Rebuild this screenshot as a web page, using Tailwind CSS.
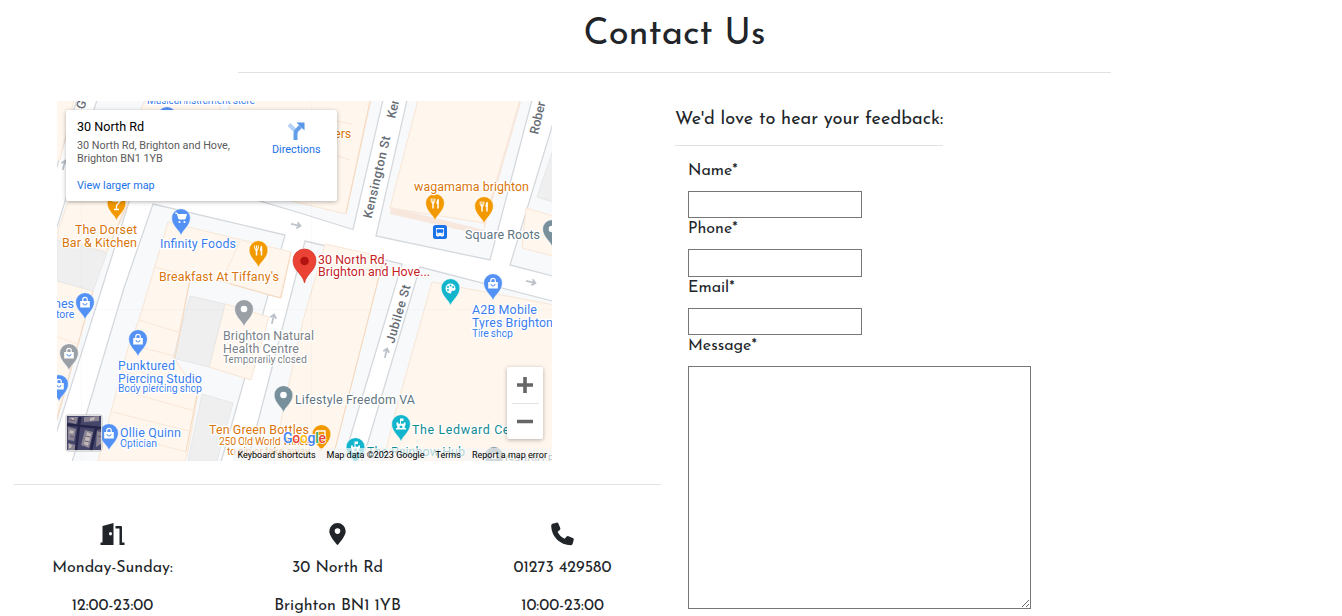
<!DOCTYPE html>
<html lang="en">
<head>
<meta charset="utf-8">
<title>Contact Us</title>
<script src="https://cdn.jsdelivr.net/npm/@tailwindcss/browser@4"></script>
</head>
<body class="bg-white text-[#212529] font-['Josefin_Sans','Lato',sans-serif] text-[16px] leading-6 h-[616px] overflow-hidden">
<header class="mx-auto w-[873px] translate-x-[3px] h-[73px] border-b border-[#e1e2e3] text-center pt-[11px]">
  <h1 class="pl-px text-[36.400px] leading-[48px]">Contact Us</h1>
</header>
<main class="flex">
<section class="w-[675px] shrink-0 pt-7">
  <div class="relative ml-[57px] w-[495px] h-[360px] overflow-hidden font-['Roboto',sans-serif]">
    <svg width="495" height="360" viewBox="57 101 495 360" class="block">
      <defs>
        <g id="pin"><path d="M0 13.500C-1.500 8-9.300 4-9.300-4A9.300 9.300 0 0 1 9.300-4C9.300 4 1.500 8 0 13.500Z" stroke="#fff" stroke-opacity=".6" stroke-width=".8"/></g>
        <g id="bag" fill="#fff"><path d="M-4.800-5h9.600v6.500h-9.600z"/><path d="M-2.200-5v-1.500a2.200 2.200 0 0 1 4.400 0V-5" fill="none" stroke="#fff" stroke-width="1.200"/><path d="M-2-3a2 2 0 0 0 4 0" fill="none" stroke="#5491f5"/></g>
        <g id="fork" fill="none" stroke="#fff"><path d="M-3.800-8.500v3M-2-8.500v3M-.2-8.500v3" stroke-width="1"/><path d="M-4.300-5.500h4.600l-1.300 2h-2z" fill="#fff" stroke="none"/><path d="M-2-4v5.500M3 1.500v-9" stroke-width="1.500"/><path d="M3.500-8.500v5.500H1.500q-.3-4 2-5.500z" fill="#fff" stroke="none"/></g>
        <g id="fort" fill="#fff"><path fill-rule="evenodd" d="M-4.500-5.500h1.800v1.200h1.700V-9.500h3.500v2.500H0v2.700h2.700v-1.200h1.800v3h-.8V0h1.300v1.500h-10V0h1.300v-2.500h-.8zM-1.300 0h2.600v-2.300h-2.600z"/></g>
        <g id="arrow" fill="none" stroke="#bcc2ca" stroke-width="1.800"><path d="M0 5v-9M-3-1l3-3.500L3-1"/></g>
      </defs>
      <path fill="#fff" d="M57 101h495v360H57z"/>
      <g fill="#f7f9fb" stroke="#d5d8dc" stroke-width="1.300">
        <path d="M56 100H77L56 170Z"/>
        <path d="M97 100H383L353 229.500L300 213L150 168L129 202L56 434V230Z"/>
        <path d="M407 100H532L490 260L376 236Z"/>
        <path d="M560 100L510 265L560 278Z"/>
        <path d="M153 204L285 235L233 420L221 462H72L124 288Z"/>
        <path d="M305 241L402 264L350 438L343 462H247L255 433Z"/>
        <path d="M420 267L560 303V462H361L368 442Z"/>
      </g>
      <g fill="#fff6ee" stroke="#f8e6d4" stroke-width="1">
        <path d="M56 100H74L60 160H56Z"/>
        <path d="M145 100H222L219 112H140Z"/>
        <path d="M230 100H371L346 214L300 203L220 180Z"/>
        <path d="M418 100H520L484 223L390 208Z"/>
        <path d="M68 202H127L107 252L58 238V230Z"/>
        <path d="M56 280L93 291L56 420Z"/>
        <path d="M168 222L291 252L280 298L232 284L191 274L174 358L198 394L188 451L185 461H98L129 344L139 320Z"/>
        <path d="M225 304L269 317L251 380L209 367Z"/>
        <path d="M325 244L384 257L332 461H275L283 410L303 321Z"/>
        <path d="M432 282L560 306V462H383L396 410Z"/>
        <path d="M526 208L553 216V256L522 248Z"/>
      </g>
      <g fill="#f7e7dc"><path d="M391 207L484 230L482 235L390 214Z"/><path d="M519 102L484 223V231L521 102Z"/></g>
      <g fill="#efefef" stroke="#e6e7e8">
        <path d="M57 240L107 253L93 291L57 281Z"/>
        <path d="M190 296L225 304L209 367L173 358Z"/>
        <path d="M202 394L233 403L217 461H188Z"/>
        <path d="M553 150L537 197L553 202Z"/>
      </g>
      <g fill="none" stroke="#f4d9bf" stroke-width="1">
        <path d="M93 291L57 420M107 250L128 204M370 101L346 213M332 461L384 257M190 280L175 358M197 394L186 451M291 252L281 298L230 284"/>
        <path stroke="#fae8d8" d="M352 124L320 118M352 140L337 136M350 160L337 156M155 267L188 276M139 320L181 333M131 345L175 356M120 390L195 411M113 412L193 432M107 431L187 452M240 241L226 272M57 337L77 344M57 378L68 382"/>
      </g>
      <path d="M57 309.500H552M311.500 101V461M81.500 101V461" stroke="#000" stroke-opacity=".02"/>
      <use href="#arrow" transform="translate(296 225) rotate(102)"/>
      <use href="#arrow" transform="translate(273 319) rotate(14)"/>
      <use href="#arrow" transform="translate(386 353) rotate(14)"/>
      <use href="#arrow" transform="translate(531 282) rotate(104)"/>
      <use href="#arrow" transform="translate(64 165) rotate(14)"/>

      <g fill="#5491f5"><use href="#pin" x="181" y="222"/><use href="#pin" x="85" y="306"/><use href="#pin" x="138" y="343"/><use href="#pin" x="59" y="388"/><use href="#pin" x="109" y="437"/><use href="#pin" x="493" y="287"/><use href="#pin" x="167" y="120"/></g>
      <use href="#bag" x="85" y="306"/><use href="#bag" x="138" y="343"/><use href="#bag" x="59" y="388"/><use href="#bag" x="109" y="437"/><use href="#bag" x="493" y="287"/>
      <path d="M175 213h2l2 6h6l1.500-4.500h-9" fill="#fff" stroke="#fff"/><circle cx="179.500" cy="222" r="1.100" fill="#fff"/><circle cx="184.500" cy="222" r="1.100" fill="#fff"/>
      <g fill="#f29900"><use href="#pin" x="116.500" y="207"/><use href="#pin" x="258.500" y="254"/><use href="#pin" x="435" y="207"/><use href="#pin" x="484" y="210"/><use href="#pin" x="321.500" y="438"/></g>
      <use href="#fork" x="258.500" y="254"/><use href="#fork" x="435" y="207"/><use href="#fork" x="484" y="210"/>
      <path d="M112.500 201h8l-4 4.500V209M114 209.500h5" fill="none" stroke="#fff" stroke-width="1.300"/>
      <path d="M317 431h8v5h-8zM317 439h7" fill="none" stroke="#fff" stroke-width="1.400"/>
      <g fill="#9aa0a6"><use href="#pin" x="69" y="357"/><use href="#pin" x="244" y="313"/></g>
      <use href="#bag" x="69" y="357"/>
      <g fill="#78909c"><use href="#pin" x="283.500" y="399"/><use href="#pin" x="552" y="233"/><use href="#pin" x="494" y="460"/></g>
      <g fill="#fff"><circle cx="244" cy="309" r="3.300"/><circle cx="283.500" cy="395" r="3.300"/><circle cx="552" cy="229" r="3.300"/><circle cx="494" cy="456" r="3.300"/></g>
      <g fill="#12b5cb"><use href="#pin" x="450.500" y="292"/><use href="#pin" x="401" y="428"/><use href="#pin" x="355.500" y="451"/></g>
      <use href="#fort" x="401" y="428"/><use href="#fort" x="355.500" y="451"/>
      <path d="M450.500 283.500a5 5 0 1 0 0 10c1.500 0 0-2 1.500-2.500s3.500.5 3.500-2.500a5 5 0 0 0-5-5z" fill="#fff"/><g fill="#12b5cb"><circle cx="448" cy="287" r="1"/><circle cx="450.500" cy="285.500" r="1"/><circle cx="453.200" cy="287" r="1"/><circle cx="448" cy="290" r="1"/></g>
      <rect x="433" y="225" width="14" height="14" rx="2.500" fill="#1a73e8"/><path d="M436 228h8v8h-1.500v1h-1v-1h-3v1h-1v-1H436z" fill="#fff"/><path d="M437 229.500h6v3h-6zM437.200 234h1.300M441.500 234h1.300" fill="#1a73e8" stroke="#1a73e8" stroke-width=".6"/>
      <path d="M304.500 283C303 274 293 271 293 260.500A11.500 11.500 0 0 1 316 260.500C316 271 306 274 304.500 283Z" fill="#ea4335" stroke="#d23226" stroke-width=".7"/><circle cx="304.500" cy="261" r="4.300" fill="#b31412"/>

      <g font-size="12.500" stroke="#fff" stroke-width="2.500" stroke-linejoin="round" paint-order="stroke">
        <g fill="#d9750a">
          <text x="75" y="234" textLength="62">The Dorset</text><text x="62" y="246.500" textLength="75">Bar &amp; Kitchen</text>
          <text x="159" y="281" textLength="120">Breakfast At Tiffany's</text>
          <text x="414" y="191" textLength="115">wagamama brighton</text>
          <text x="334" y="138">ers</text>
          <text x="209" y="434" textLength="100">Ten Green Bottles</text>
          <text x="219" y="444.500" font-size="10.500" textLength="91">250 Old World Wines</text>
          <text x="227" y="454.500" font-size="10.500" textLength="83">to sip or take away</text>
        </g>
        <g fill="#3b7ded">
          <text x="160" y="248" textLength="76">Infinity Foods</text>
          <text x="54" y="308">nes</text><text x="56" y="318" font-size="10.500">tore</text>
          <text x="118" y="370" textLength="57">Punktured</text><text x="118" y="382.500" textLength="84">Piercing Studio</text><text x="118" y="392" font-size="10.500" textLength="84">Body piercing shop</text>
          <text x="120" y="437" textLength="61">Ollie Quinn</text><text x="120" y="447" font-size="10.500" textLength="37">Optician</text>
          <text x="472" y="314" textLength="65">A2B Mobile</text><text x="472" y="326.500" textLength="81">Tyres Brighton</text><text x="472" y="336.500" font-size="10.500" textLength="41">Tire shop</text>
          <text x="147" y="103.500" font-size="10.500" textLength="108">Musical instrument store</text>
        </g>
        <g fill="#7b8187"><text x="223" y="340" textLength="91">Brighton Natural</text><text x="223" y="352.500" textLength="76">Health Centre</text><text x="223" y="363" font-size="10.500" textLength="84">Temporarily closed</text></g>
        <g fill="#607580"><text x="295" y="404" textLength="120">Lifestyle Freedom VA</text><text x="465" y="238.500" textLength="75">Square Roots</text><text x="505" y="464">Gaudio F</text></g>
        <g fill="#128a93"><text x="412" y="434" textLength="105">The Ledward Cen</text><text x="367" y="456" textLength="98">The Rainbow Hub</text></g>
        <g fill="#c5221f"><text x="318" y="263.500" textLength="69">30 North Rd,</text><text x="318" y="276" textLength="112">Brighton and Hove...</text></g>
        <g fill="#666c73" stroke-width="1" font-weight="500">
          <text transform="translate(371.500 219) rotate(-77)" textLength="84">Kensington St</text>
          <text transform="translate(395 119) rotate(-77)">Kensington St</text>
          <text transform="translate(394 344) rotate(-74)" textLength="60">Jubilee St</text>
          <text transform="translate(538 135) rotate(-77)">Robert St</text>
          <text transform="translate(84 110) rotate(-72)">Gardner</text>
        </g>
      </g>
      <g font-size="14" font-weight="500" stroke="#fff" stroke-width="1.500" paint-order="stroke"><text x="283" y="443" textLength="43"><tspan fill="#4285f4">G</tspan><tspan fill="#ea4335">o</tspan><tspan fill="#fbbc04">o</tspan><tspan fill="#4285f4">g</tspan><tspan fill="#34a853">l</tspan><tspan fill="#ea4335">e</tspan></text></g>
      <g>
        <rect x="66" y="415" width="36" height="36" rx="2" fill="#fff" stroke="#999" stroke-width=".6"/>
        <path d="M67 416h34v34H67z" fill="#46456a"/>
        <path d="M69 417h9l-2 7-8-2zM84 417l15-1v5l-15 1zM68 427l8 2-2 12-6-1zM85 430l8 2-4 16-8-3zM97 431l4 1v12l-5 3zM68 443l8 2-1 5h-7z" fill="#8b8593"/>
        <path d="M87 432l4 2-3 12-4-2zM70 430l4 1-1 3-4-1zM90 418l5-1-1 3-4 1zM69 444l3 1-1 3h-2zM71 418l3 0-1 3z" fill="#c0b9b8"/>
        <path d="M70 436l4 1M86 436l4 1M69 420l6 1M98 436l3 1M85 441l4 1" stroke="#625a72" stroke-width="1"/>
        <path d="M67 424.500l34 3.500M80 417l-4 33M96 428l-5 22" stroke="#252449" stroke-width="2.600"/>
      </g>
    </svg>
    <div class="absolute left-[9px] top-[9px] w-[271px] h-[91px] bg-white rounded-[2px] shadow-[0_1px_4px_rgba(0,0,0,.3)] flex justify-between pl-[11px] pr-[16.500px] pt-[9px]">
      <div>
        <div class="text-[12.600px] leading-4 text-black">30 North Rd</div>
        <div class="mt-[4px] text-[10.800px] leading-[13px] text-[#5b5b5b] whitespace-nowrap">30 North Rd, Brighton and Hove,<br>Brighton BN1 1YB</div>
        <div class="mt-[13px] text-[10.800px] leading-4 text-[#1a73e8]">View larger map</div>
      </div>
      <div class="flex flex-col items-center pt-[2px]">
        <svg width="20" height="20" viewBox="0 0 20 20"><path d="M3 3.500L10 10.500" stroke="#b4d1f8" stroke-width="4" fill="none"/><path d="M9.500 19v-6q0-3 2.500-5L14.500 5.500" stroke="#639fe9" stroke-width="4" fill="none"/><path d="M10.500 1.500H18.500V9.500Z" fill="#5796e6"/></svg>
        <div class="mt-px text-[10.800px] leading-4 text-[#1a73e8]">Directions</div>
      </div>
    </div>
    <div class="absolute left-[450px] top-[266px] w-[36px] h-[72px] bg-white rounded-[2px] shadow-[0_1px_4px_rgba(0,0,0,.3)]">
      <svg width="36" height="72" viewBox="0 0 36 72"><path d="M10 18h16M18 10v16M10 54.500h16" stroke="#666" stroke-width="3.600"/><path d="M5 36.500h27" stroke="#e2e2e2"/></svg>
    </div>
    <div class="absolute bottom-0 right-0 h-[13px] w-[319px] bg-[#f5f5f5]/70 flex justify-end gap-[11px] pr-[5px] text-[9px] leading-[14px] text-black whitespace-nowrap">
      <span>Keyboard shortcuts</span><span>Map data ©2023 Google</span><span>Terms</span><span>Report a map error</span>
    </div>
  </div>
  <div class="ml-[14px] mt-[23px] w-[647px] border-t border-[#e1e2e3]"></div>
  <div class="grid grid-cols-3 text-center pt-[37px]">
    <div class="flex flex-col items-center">
      <svg width="25" height="24" viewBox="0.500 0 25 24" fill="#212529"><path fill-rule="evenodd" d="M3 4L14 1V23H1V20.500H3ZM11 10a1.500 1.700 0 1 0 0 3.400 1.500 1.700 0 0 0 0-3.400Z"/><path d="M16 4H21.500Q22.500 4 22.500 5V20.500H25V23H20V6.500H16Z"/></svg>
      <p class="mt-[10px]">Monday-Sunday:</p><p class="mt-[14px]">12:00-23:00</p>
    </div>
    <div class="flex flex-col items-center">
      <svg width="25" height="24" viewBox="0.500 0 25 24" fill="#212529"><path fill-rule="evenodd" d="M13 1A8.200 8.200 0 0 1 21.200 9.200C21.200 13.500 16 19.500 13.700 22.500Q13 23.300 12.300 22.500C10 19.500 4.800 13.500 4.800 9.200A8.200 8.200 0 0 1 13 1ZM13 6.300A2.800 2.800 0 1 0 13 11.900A2.800 2.800 0 1 0 13 6.300Z"/></svg>
      <p class="mt-[10px]">30 North Rd</p><p class="mt-[14px]">Brighton BN1 1YB</p>
    </div>
    <div class="flex flex-col items-center">
      <svg width="23" height="24" viewBox="0 -14 512 545" fill="#212529"><path d="M164.900 24.600c-7.700-18.600-28-28.500-47.400-23.200l-88 24C12.100 30.200 0 46 0 64c0 247.400 200.600 448 448 448c18 0 33.800-12.100 38.600-29.500l24-88c5.300-19.400-4.600-39.700-23.200-47.400l-96-40c-16.300-6.800-35.200-2.100-46.300 11.600L304.700 368C234.300 334.700 177.300 277.700 144 207.300L193.300 167c13.700-11.200 18.400-30 11.600-46.300l-40-96z"/></svg>
      <p class="mt-[10px]">01273 429580</p><p class="mt-[14px]">10:00-23:00</p>
    </div>
  </div>
</section>
<section class="pt-[34px]">
  <h2 class="w-[268px] h-[39px] border-b border-[#e1e2e3] text-[18.200px] leading-[25px] whitespace-nowrap">We'd love to hear your feedback:</h2>
  <form class="ml-[13px] pt-[13px] flex flex-col items-start">
    <label for="n" class="h-[32px]">Name*</label>
    <input id="n" class="block w-[174px] h-[27px] border border-[#767676]">
    <label for="p" class="h-[31px] leading-[22px]">Phone*</label>
    <input id="p" class="block w-[174px] h-[28px] border border-[#767676]">
    <label for="e" class="h-[31px] leading-[22px]">Email*</label>
    <input id="e" class="block w-[174px] h-[27px] border border-[#767676]">
    <label for="m" class="h-[31px] leading-[22px]">Message*</label>
    <textarea id="m" class="block w-[343px] h-[243px] border border-[#767676]"></textarea>
  </form>
</section>
</main>
</body>
</html>
